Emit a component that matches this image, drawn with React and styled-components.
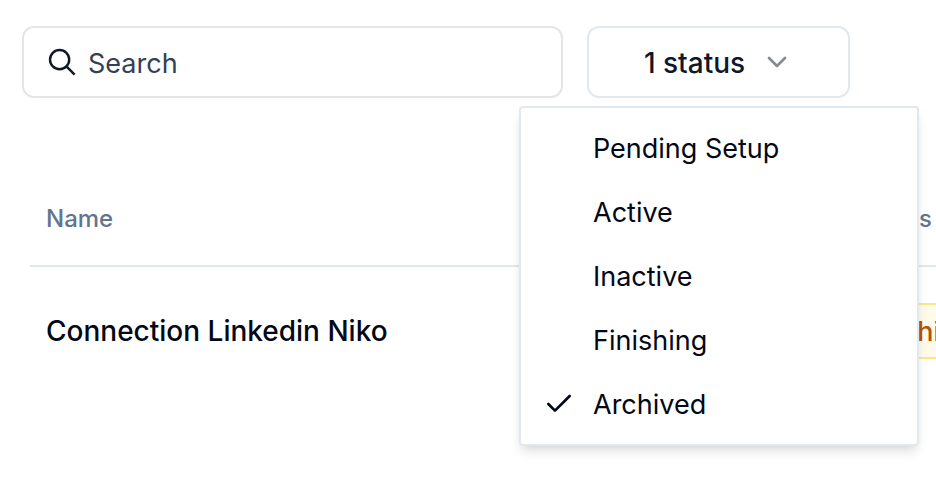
import React, { useState } from "react";
import styled, { createGlobalStyle } from "styled-components";
import { Check, ChevronDown } from "lucide-react";

const GlobalStyle = createGlobalStyle`
  *, *::before, *::after { box-sizing: border-box; }
  body {
    margin: 0;
    background: #fff;
    color: #020817;
    font-family: Inter, "Liberation Sans", sans-serif;
    font-size: 27px;
    line-height: 40px;
    -webkit-font-smoothing: antialiased;
  }
  button, input { font: inherit; color: inherit; }
`;

const Page = styled.main`
  min-height: 100vh;
  overflow: hidden;
  padding-top: 26px;
`;

const Toolbar = styled.div`
  display: flex;
  gap: 24px;
  padding: 0 86px 0 22px;
`;

const SearchField = styled.label`
  flex: 1;
  min-width: 0;
  display: flex;
  align-items: center;
  gap: 8px;
  height: 72px;
  padding: 0 20px;
  border: 2px solid #e5e5e5;
  border-radius: 12px;
  color: #0f172a;

  svg { flex: none; }
`;

const SearchInput = styled.input`
  flex: 1;
  min-width: 0;
  height: 44px;
  padding: 2px 0 0;
  border: 0;
  outline: 0;
  background: transparent;

  &::placeholder { color: #334155; opacity: 1; }
`;

const Filter = styled.div`
  position: relative;
  flex: none;
`;

const FilterButton = styled.button`
  display: flex;
  align-items: center;
  justify-content: center;
  gap: 16px;
  width: 263px;
  height: 72px;
  padding: 0;
  border: 2px solid #e2e8f0;
  border-radius: 12px;
  background: #fff;
  color: #0f172a;
  font-size: 28px;
  font-weight: 500;
  cursor: pointer;

  svg { opacity: 0.5; }
`;

const FilterLabel = styled.span`
  padding-top: 2px;
`;

const Menu = styled.div`
  position: absolute;
  z-index: 1;
  top: 80px;
  left: -68px;
  width: 400px;
  padding: 8px;
  border: 2px solid #e2e8f0;
  border-radius: 4px;
  background: #fff;
  box-shadow: 0 8px 12px -2px rgb(0 0 0 / 0.1), 0 4px 8px -4px rgb(0 0 0 / 0.1);
`;

const MenuItem = styled.button`
  display: grid;
  grid-template-columns: 32px 1fr;
  column-gap: 18px;
  align-items: center;
  width: 100%;
  height: 64px;
  padding: 0 14px;
  border: 0;
  background: transparent;
  text-align: left;
  cursor: pointer;
`;

const ItemLabel = styled.span`
  grid-column: 2;
  grid-row: 1;
  padding-top: 2px;
`;

const ItemMark = styled(Check)`
  grid-column: 1;
  grid-row: 1;
`;

const Table = styled.table`
  width: 100%;
  min-width: 1060px;
  margin: 73px 0 0 30px;
  border-spacing: 0;
  table-layout: fixed;
`;

const NameColumn = styled.col`
  width: 813px;
`;

const HeadCell = styled.th`
  height: 96px;
  padding: 2px 16px 0;
  border-bottom: 2px solid #e2e8f0;
  color: #64748b;
  font-size: 24px;
  font-weight: 500;
  text-align: left;
`;

const Cell = styled.td`
  height: 128px;
  padding: 0 16px;
  font-size: 28px;
  font-weight: 500;
`;

const Badge = styled.span`
  display: inline-flex;
  align-items: center;
  height: 56px;
  padding: 2px 20px 0;
  margin-left: -24px;
  border: 2px solid #fde68a;
  border-radius: 12px;
  background: #fffbeb;
  color: #b45309;
  font-size: 27px;
  font-weight: 500;
  vertical-align: middle;
`;

function SearchIcon() {
  return (
    <svg width="36" height="36" viewBox="0 0 15 15" fill="none" stroke="currentColor" aria-hidden="true">
      <circle cx="6.5" cy="6.5" r="4" />
      <path d="M9.35 9.35 12.75 12.75" />
    </svg>
  );
}

const statuses = ["Pending Setup", "Active", "Inactive", "Finishing", "Archived"];

export default function App() {
  const [selected, setSelected] = useState(["Archived"]);
  const [open, setOpen] = useState(true);

  const toggle = (status) =>
    setSelected((current) =>
      current.includes(status) ? current.filter((s) => s !== status) : [...current, status]
    );

  return (
    <>
      <GlobalStyle />
      <Page>
        <Toolbar>
          <SearchField>
            <SearchIcon />
            <SearchInput type="text" placeholder="Search" aria-label="Search" />
          </SearchField>
          <Filter>
            <FilterButton type="button" aria-haspopup="menu" aria-expanded={open} onClick={() => setOpen(!open)}>
              <FilterLabel>{selected.length} status</FilterLabel>
              <ChevronDown size={32} aria-hidden="true" />
            </FilterButton>
            {open && (
              <Menu role="menu" aria-label="Status">
                {statuses.map((status) => (
                  <MenuItem
                    key={status}
                    type="button"
                    role="menuitemcheckbox"
                    aria-checked={selected.includes(status)}
                    onClick={() => toggle(status)}
                  >
                    {selected.includes(status) && <ItemMark size={32} aria-hidden="true" />}
                    <ItemLabel>{status}</ItemLabel>
                  </MenuItem>
                ))}
              </Menu>
            )}
          </Filter>
        </Toolbar>
        <Table>
          <colgroup>
            <NameColumn />
            <col />
          </colgroup>
          <thead>
            <tr>
              <HeadCell scope="col">Name</HeadCell>
              <HeadCell scope="col">Status</HeadCell>
            </tr>
          </thead>
          <tbody>
            <tr>
              <Cell>Connection Linkedin Niko</Cell>
              <Cell>
                <Badge>Finishing</Badge>
              </Cell>
            </tr>
          </tbody>
        </Table>
      </Page>
    </>
  );
}
